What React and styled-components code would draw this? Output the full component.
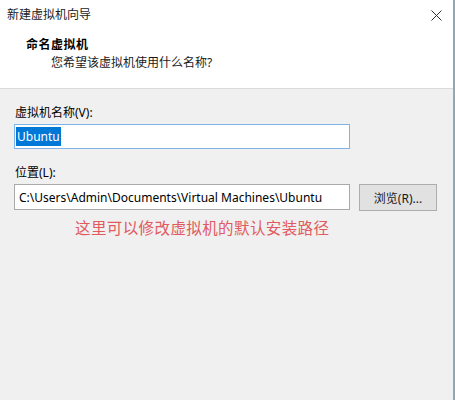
import React from "react";
import styled, { createGlobalStyle } from "styled-components";

const GlobalStyle = createGlobalStyle`
  html, body {
    margin: 0;
    padding: 0;
    background: #f0f0f0;
  }
  body {
    font-family: "Noto Sans", "Noto Sans CJK SC", sans-serif;
    font-size: 12px;
    color: #000;
  }
`;

const Window = styled.div`
  width: 455px;
  height: 400px;
  box-sizing: border-box;
  border-right: 2px solid #8fa8b2;
  display: flex;
  flex-direction: column;
  background: #f0f0f0;
  overflow: hidden;
`;

const Top = styled.div`
  background: #ffffff;
  height: 88px;
  border-bottom: 1px solid #d9d9d9;
  display: flex;
  flex-direction: column;
`;

const TitleBar = styled.div`
  height: 30px;
  padding: 0 10px 0 7px;
  display: flex;
  align-items: center;
  justify-content: space-between;
`;

const Title = styled.div`
  font-size: 12px;
  line-height: 16px;
  color: #1a1a1a;
`;

const Close = styled.div`
  width: 12px;
  height: 12px;
  display: flex;
  align-items: center;
  justify-content: center;
  margin-right: 1px;
`;

const Heading = styled.div`
  margin: 7px 0 0 26px;
  font-size: 12px;
  line-height: 16px;
  font-weight: 700;
  letter-spacing: 0.5px;
`;

const SubHeading = styled.div`
  margin: 2px 0 0 51px;
  font-size: 12px;
  line-height: 16px;
  color: #1a1a1a;
`;

const Body = styled.div`
  flex: 1;
  padding: 0 14px;
  display: flex;
  flex-direction: column;
`;

const Label = styled.div`
  margin-top: ${(p) => p.gap}px;
  padding-left: 1px;
  font-size: 12px;
  line-height: 16px;
`;

const Row = styled.div`
  margin-top: 3px;
  display: flex;
  align-items: flex-start;
  gap: 9px;
`;

const Field = styled.div`
  width: 336px;
  height: ${(p) => p.h}px;
  box-sizing: border-box;
  background: #ffffff;
  border: 1px solid ${(p) => (p.focused ? "#7eb4ea" : "#a9a9a9")};
  padding: 0 ${(p) => (p.focused ? 1 : 4)}px;
  display: flex;
  align-items: center;
  font-size: 12px;
  white-space: nowrap;
  overflow: hidden;
`;

const Selected = styled.span`
  background: #0078d7;
  color: #ffffff;
  line-height: 19px;
  padding: 0 1px;
`;

const Button = styled.div`
  width: 78px;
  height: 27px;
  box-sizing: border-box;
  background: #e1e1e1;
  border: 1px solid #adadad;
  display: flex;
  align-items: center;
  justify-content: center;
  font-size: 12px;
  color: #1a1a1a;
`;

const Note = styled.div`
  margin: 6px 0 0 61px;
  font-family: "Noto Sans CJK SC", serif;
  font-size: 15.5px;
  line-height: 20px;
  color: #e05a5f;
  letter-spacing: 0.4px;
`;

const App = () => (
  <>
    <GlobalStyle />
    <Window>
      <Top>
        <TitleBar>
          <Title>新建虚拟机向导</Title>
          <Close>
            <svg width="11" height="11" viewBox="0 0 11 11">
              <path d="M0.5 0.5 L10.5 10.5 M10.5 0.5 L0.5 10.5" stroke="#333" strokeWidth="1" />
            </svg>
          </Close>
        </TitleBar>
        <Heading>命名虚拟机</Heading>
        <SubHeading>您希望该虚拟机使用什么名称?</SubHeading>
      </Top>
      <Body>
        <Label gap={16}>虚拟机名称(V):</Label>
        <Row>
          <Field h={25} focused>
            <Selected>Ubuntu</Selected>
          </Field>
        </Row>
        <Label gap={16}>位置(L):</Label>
        <Row>
          <Field h={26}>C:\Users\Admin\Documents\Virtual Machines\Ubuntu</Field>
          <Button>浏览(R)...</Button>
        </Row>
        <Note>这里可以修改虚拟机的默认安装路径</Note>
      </Body>
    </Window>
  </>
);

export default App;
